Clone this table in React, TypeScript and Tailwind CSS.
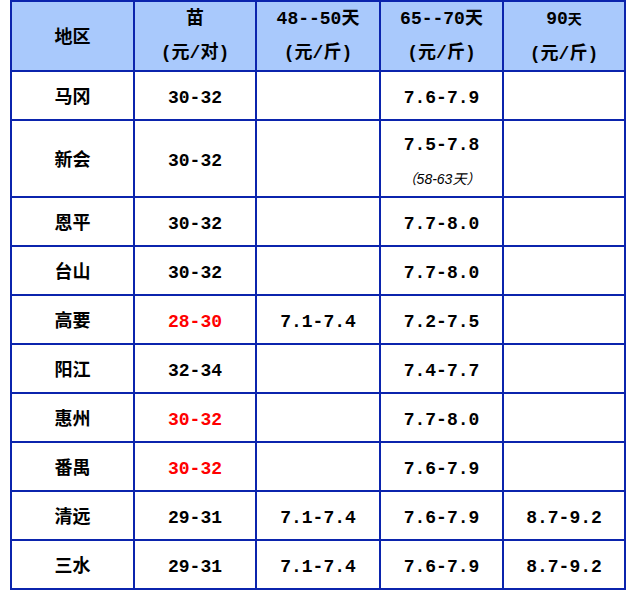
import React from 'react'

type Row = {
  region: string
  seed: string
  seedRed?: boolean
  d48: string
  d65: string
  d65Note?: string
  d90: string
  tall?: boolean
}

const rows: Row[] = [
  { region: '马冈', seed: '30-32', d48: '', d65: '7.6-7.9', d90: '' },
  { region: '新会', seed: '30-32', d48: '', d65: '7.5-7.8', d65Note: '（58-63天）', d90: '', tall: true },
  { region: '恩平', seed: '30-32', d48: '', d65: '7.7-8.0', d90: '' },
  { region: '台山', seed: '30-32', d48: '', d65: '7.7-8.0', d90: '' },
  { region: '高要', seed: '28-30', seedRed: true, d48: '7.1-7.4', d65: '7.2-7.5', d90: '' },
  { region: '阳江', seed: '32-34', d48: '', d65: '7.4-7.7', d90: '' },
  { region: '惠州', seed: '30-32', seedRed: true, d48: '', d65: '7.7-8.0', d90: '' },
  { region: '番禺', seed: '30-32', seedRed: true, d48: '', d65: '7.6-7.9', d90: '' },
  { region: '清远', seed: '29-31', d48: '7.1-7.4', d65: '7.6-7.9', d90: '8.7-9.2' },
  { region: '三水', seed: '29-31', d48: '7.1-7.4', d65: '7.6-7.9', d90: '8.7-9.2' },
]

const cell = 'border-2 border-[#0b24ad] text-center align-middle p-0'
const font = "font-['Liberation_Mono','Noto_Sans_CJK_SC',monospace]"

export default function App() {
  return (
    <div className="min-h-[591px] w-[643px] bg-white">
      <table className={`ml-[10px] border-collapse table-fixed text-[18px] font-bold text-black leading-[20px] ${font}`}>
        <colgroup>
          <col className="w-[123px]" />
          <col className="w-[122px]" />
          <col className="w-[124px]" />
          <col className="w-[123px]" />
          <col className="w-[122px]" />
        </colgroup>
        <thead>
          <tr className="h-[70px] bg-[#a9c9fc]">
            <th className={`${cell} pt-[4px]`}>地区</th>
            <th className={cell}>
              <div className="flex flex-col items-center gap-[14px]">
                <div>苗</div>
                <div>(元/对)</div>
              </div>
            </th>
            <th className={cell}>
              <div className="flex flex-col items-center gap-[14px]">
                <div>48--50天</div>
                <div>(元/斤)</div>
              </div>
            </th>
            <th className={cell}>
              <div className="flex flex-col items-center gap-[14px]">
                <div>65--70天</div>
                <div>(元/斤)</div>
              </div>
            </th>
            <th className={cell}>
              <div className="flex flex-col items-center gap-[14px]">
                <div>
                  90<span className="text-[14px]">天</span>
                </div>
                <div>(元/斤)</div>
              </div>
            </th>
          </tr>
        </thead>
        <tbody>
          {rows.map((r) => (
            <tr key={r.region} className={r.tall ? 'h-[77px]' : 'h-[49px]'}>
              <td className={`${cell} pt-[4px]`}>{r.region}</td>
              <td className={`${cell} pt-[4px] ${r.seedRed ? 'text-[#ff0000]' : ''}`}>{r.seed}</td>
              <td className={`${cell} pt-[4px]`}>{r.d48}</td>
              <td className={`${cell} pt-[4px]`}>
                {r.d65Note ? (
                  <div className="flex flex-col items-center">
                    <div>{r.d65}</div>
                    <div className="mt-[16px] text-[14px] font-normal italic leading-[16px] font-['Liberation_Sans','Noto_Sans_CJK_SC',sans-serif]">
                      {r.d65Note}
                    </div>
                  </div>
                ) : (
                  r.d65
                )}
              </td>
              <td className={`${cell} pt-[4px]`}>{r.d90}</td>
            </tr>
          ))}
        </tbody>
      </table>
    </div>
  )
}
